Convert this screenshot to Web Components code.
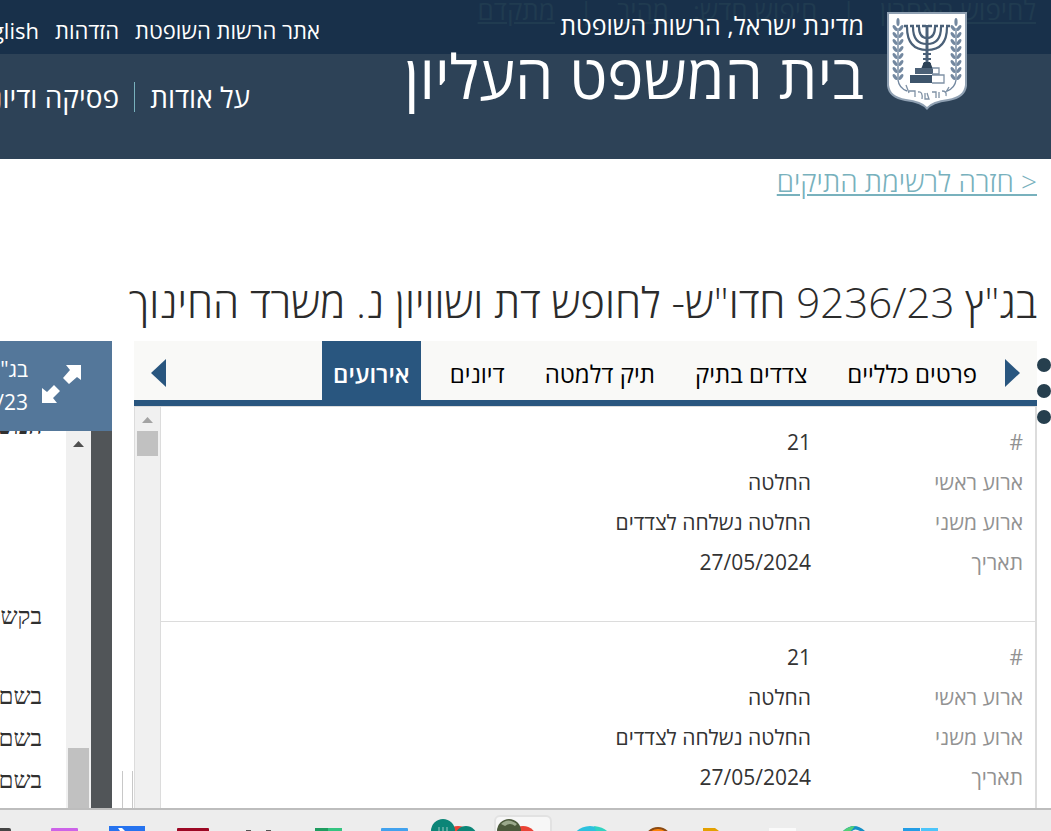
<!DOCTYPE html>
<html lang="he" dir="rtl">
<head>
<meta charset="utf-8">
<title>בית המשפט העליון</title>
<style>
    html, body {
        margin: 0;
        height: 100%;
        overflow: hidden;
    }

    body {
        background: #ffffff;
        color: #2b2b2b;
        font-family: "Open Sans", "Noto Sans", sans-serif;
        --navy: #18304a;
        --slate: #2d4257;
        --blue: #29567f;
        --teal: #78b1bd;
        --line: #dcdcdc;
    }
</style>
</head>
<body>
<court-page></court-page>

<script>
// Small helper: every element clones its own template into an open root
class BaseElement extends HTMLElement {
    constructor() {
        super();
        this.attachShadow({ mode: 'open' });
    }

    connectedCallback() {
        const template = document.createElement('template');
        template.innerHTML = this.markup();
        this.shadowRoot.replaceChildren(template.content.cloneNode(true));
    }
}

class StateEmblem extends BaseElement {
    markup() {
        // Laurel leaves, mirrored on both sides of the menorah
        let leaves = '';
        for (let i = 0; i < 8; i++) {
            const y = 16 + i * 7;
            leaves += `<ellipse cx="8" cy="${y}" rx="1.6" ry="3.4" transform="rotate(-35 8 ${y})"/>
                <ellipse cx="14" cy="${y}" rx="1.6" ry="3.4" transform="rotate(35 14 ${y})"/>`;
        }
        return `
            <style>
                :host { display: block; width: 80px; }
                svg { display: block; width: 100%; height: auto; }
            </style>
            <svg viewBox="0 0 80 98" role="img" aria-label="סמל המדינה">
                <path d="M0 0H80V74C79 82 73 87 62 89Q45 91 40 98Q35 91 18 89C7 87 1 82 0 74Z" fill="#8fa0b2"/>
                <path d="M2 2H78V73C77 81 72 85 61 87Q45 89 40 95Q35 89 19 87C8 85 3 81 2 73Z" fill="#fff"/>
                <g fill="#7388a0" stroke="none">
                    <g>${leaves}<ellipse cx="11" cy="10" rx="1.6" ry="4"/></g>
                    <g transform="matrix(-1 0 0 1 80 0)">${leaves}<ellipse cx="11" cy="10" rx="1.6" ry="4"/></g>
                </g>
                <g fill="none" stroke="#7388a0" stroke-width="1.4">
                    <path d="M11 16V68Q12 76 20 79M69 16V68Q68 76 60 79"/>
                </g>
                <g fill="none" stroke="#4a6078" stroke-width="2.2">
                    <path d="M20 15Q20 38 40 38Q60 38 60 15"/>
                    <path d="M26 15Q26 32 40 32Q54 32 54 15"/>
                    <path d="M32 15Q32 26 40 26Q48 26 48 15"/>
                    <path d="M40 13V54" stroke-width="3"/>
                    <path d="M17 14H63" stroke-width="2.6" stroke-dasharray="4 2"/>
                    <path d="M36 42H44M36 47H44M36 52H44"/>
                </g>
                <path d="M37 50H43L46 57H34Z" fill="#2d4257"/>
                <path d="M28 56H46V62H28Z" fill="#4c6177"/>
                <path d="M23 63H45V71H23Z" fill="#3d546b"/>
                <g fill="none" stroke="#7f91a5" stroke-width="1.3">
                    <path d="M45 56H52V62H45M45 63H57V71H45"/>
                    <path d="M19 73L22 81M22 79H28V85M31 80Q36 79 35 87M38 81V87H42L40 81M45 80H49V86M52 80V86M55 79Q60 79 59 84M62 75L59 80"/>
                </g>
            </svg>
        `;
    }
}
customElements.define('state-emblem', StateEmblem);

class CourtHeader extends BaseElement {
    markup() {
        return `
            <style>
                :host {
                    display: block;
                    position: relative;
                    flex: none;
                    color: #ffffff;
                    background: linear-gradient(var(--navy) 54px, var(--slate) 54px);
                }
                a { color: inherit; text-decoration: none; white-space: nowrap; }
                /* page search bar showing faintly through the sticky header */
                .ghost {
                    position: absolute;
                    top: -10px;
                    right: 15px;
                    display: flex;
                    gap: 24px;
                    font-size: 26px;
                    line-height: 40px;
                    color: #203b50;
                    white-space: nowrap;
                }
                .ghost a { text-decoration: underline; }
                .bar {
                    position: relative;
                    display: flex;
                    align-items: flex-start;
                    height: 147px;
                    padding: 12px 84px 0 0;
                }
                .titles { flex: 1; padding-right: 23px; white-space: nowrap; }
                .titles p { margin: 0; font-size: 25px; line-height: 26px; }
                .titles h1 { margin: 0; font-size: 61px; line-height: 76px; font-weight: 400; }
                .navs { flex: 0 0 320px; width: 320px; }
                nav { display: flex; }
                .top { gap: 16px; font-size: 22px; line-height: 36px; }
                .main { margin-top: 34px; padding-right: 70px; font-size: 28px; line-height: 30px; }
                .main a + a { margin-right: 15px; padding-right: 15px; border-right: 1px solid var(--teal); }
            </style>
            <div class="ghost">
                <a href="#last">לחיפוש האחרון</a><span>|</span><span>חיפוש חדש:</span>
                <a href="#quick">מהיר</a><span>|</span><a href="#advanced">מתקדם</a>
            </div>
            <div class="bar">
                <state-emblem></state-emblem>
                <div class="titles">
                    <p>מדינת ישראל, הרשות השופטת</p>
                    <h1>בית המשפט העליון</h1>
                </div>
                <div class="navs">
                    <nav class="top">
                        <a href="#authority">אתר הרשות השופטת</a>
                        <a href="#login">הזדהות</a>
                        <a href="#en">English</a>
                    </nav>
                    <nav class="main">
                        <a href="#about">על אודות</a>
                        <a href="#rulings">פסיקה ודיונים</a>
                    </nav>
                </div>
            </div>
        `;
    }
}
customElements.define('court-header', CourtHeader);

class ScrollTrack extends BaseElement {
    markup() {
        return `
            <style>
                :host {
                    display: flex;
                    flex-direction: column;
                    align-items: center;
                    box-sizing: border-box;
                    background: #f0f0f0;
                }
                svg { flex: none; margin-top: 10px; }
                .thumb {
                    width: 21px;
                    height: var(--thumb-height, 25px);
                    margin-top: var(--thumb-top, 8px);
                    background: #c1c1c1;
                }
            </style>
            <svg width="11" height="6" viewBox="0 0 11 6"><path d="M0 6L5.500 0L11 6Z" fill="var(--arrow, #505050)"/></svg>
            <div class="thumb"></div>
        `;
    }
}
customElements.define('scroll-track', ScrollTrack);

class CaseTabs extends BaseElement {
    markup() {
        return `
            <style>
                :host {
                    display: flex;
                    flex: none;
                    height: 59px;
                    background: #f9f9f7;
                    border-bottom: 6px solid var(--blue);
                }
                button {
                    border: 0;
                    padding: 0 11px;
                    background: none;
                    color: #000000;
                    font: inherit;
                    font-size: 24px;
                    line-height: 32px;
                    white-space: nowrap;
                    cursor: pointer;
                }
                .tabs { display: flex; flex: 1; gap: 18px; }
                .tabs button { padding-top: 7px; }
                .tabs .active { background: var(--blue); color: #ffffff; font-weight: 600; }
                .arrow { padding: 4px 17px 0; }
                .next { padding-left: 17px; }
                svg { display: block; }
            </style>
            <button class="arrow next" aria-label="הקודם"><svg width="15" height="28" viewBox="0 0 15 28"><path d="M0 0L15 14L0 28Z" fill="#29567f"/></svg></button>
            <div class="tabs" role="tablist">
                <button role="tab">פרטים כלליים</button>
                <button role="tab">צדדים בתיק</button>
                <button role="tab">תיק דלמטה</button>
                <button role="tab">דיונים</button>
                <button role="tab" class="active" aria-selected="true">אירועים</button>
            </div>
            <button class="arrow" aria-label="הבא"><svg width="15" height="28" viewBox="0 0 15 28"><path d="M15 0L0 14L15 28Z" fill="#29567f"/></svg></button>
        `;
    }
}
customElements.define('case-tabs', CaseTabs);

class CaseEvent extends BaseElement {
    markup() {
        return `
            <style>
                :host { display: block; border-bottom: 1px solid var(--line); }
                dl {
                    display: grid;
                    grid-template-columns: 212px 1fr;
                    margin: 0;
                    padding: 15px 12px 39px;
                    font-size: 21px;
                    line-height: 40px;
                }
                dt { color: #929292; }
                dd { margin: 0; color: #333333; }
            </style>
            <dl>
                <dt>#</dt><dd><slot name="number"></slot></dd>
                <dt>ארוע ראשי</dt><dd><slot name="main"></slot></dd>
                <dt>ארוע משני</dt><dd><slot name="sub"></slot></dd>
                <dt>תאריך</dt><dd><slot name="date"></slot></dd>
            </dl>
        `;
    }
}
customElements.define('case-event', CaseEvent);

class DocumentViewer extends BaseElement {
    markup() {
        return `
            <style>
                :host { display: flex; flex-direction: column; min-height: 0; overflow: hidden; }
                header {
                    display: flex;
                    align-items: flex-start;
                    flex: none;
                    height: 78px;
                    padding: 12px 30px 0 0;
                    background: #54779a;
                    color: #ffffff;
                    font-size: 21px;
                    line-height: 33px;
                    white-space: nowrap;
                }
                button { border: 0; padding: 11px 0 0 14px; background: none; cursor: pointer; }
                svg { display: block; }
                .view { display: flex; flex: 1; min-height: 0; background: #515558; }
                scroll-track { flex: 0 0 25px; margin-right: 21px; --thumb-top: 301px; --thumb-height: 80px; }
                .sheet {
                    flex: 1;
                    padding-right: 24px;
                    background: #ffffff;
                    color: #303030;
                    font-family: "Liberation Serif", serif;
                    font-size: 24px;
                    line-height: 42px;
                    white-space: nowrap;
                    overflow: hidden;
                }
                p { margin: 0; }
                .cut { margin-top: -26px; font-weight: 700; }
                .request { margin-top: 148px; }
                .sign { margin-top: 38px; }
            </style>
            <header>
                <button aria-label="הגדלה"><svg width="40" height="40" viewBox="0 0 40 40" fill="#fff">
                    <path d="M24 1H39V16L35 13L27 20L21 14L28 6Z"/>
                    <path d="M0 24L5 28L12 21L18 27L11 34L15 39H0Z"/>
                </svg></button>
                <div>בג"ץ<br>9236/23</div>
            </header>
            <div class="view">
                <scroll-track></scroll-track>
                <div class="sheet">
                    <p class="cut">המשיבים</p>
                    <p class="request">בקשה</p>
                    <p class="sign">בשם</p>
                    <p>בשם</p>
                    <p>בשם</p>
                </div>
            </div>
        `;
    }
}
customElements.define('document-viewer', DocumentViewer);

class TaskBar extends BaseElement {
    markup() {
        return `
            <style>
                :host {
                    display: flex;
                    flex: none;
                    direction: ltr;
                    height: 21px;
                    overflow: hidden;
                    background: #ededed;
                    border-top: 2px solid #bdbdbd;
                }
                svg { display: block; flex: none; }
            </style>
            <svg width="31" height="21"><rect x="-10" y="18" width="21" height="20" rx="2" fill="#454545"/></svg>
            <svg width="66" height="21"><rect x="20" y="18" width="27" height="20" rx="1" fill="#cc63e8"/></svg>
            <svg width="66" height="21"><path d="M12 16H48V21H12Z" fill="#2673ef"/><path d="M21 18H25L28 21H23Z" fill="#fff"/></svg>
            <svg width="66" height="21"><rect x="14" y="18" width="32" height="20" rx="1" fill="#9c0824"/></svg>
            <svg width="66" height="21"><path d="M17 20H22V21H17ZM37 20H42V21H37Z" fill="#555"/></svg>
            <svg width="66" height="21"><path d="M20 18H34V21H20Z" fill="#1f9c60"/><path d="M33 18H47V21H33Z" fill="#35c481"/></svg>
            <svg width="66" height="21"><rect x="20" y="18" width="27" height="20" rx="1" fill="#42a2ee"/></svg>
            <svg width="66" height="21"><circle cx="31" cy="30" r="14" fill="#ea4335"/><circle cx="16" cy="21" r="12" fill="#0b8577"/><circle cx="39" cy="27" r="11" fill="#0b8577"/><path d="M12 17V21M16 17V21M20 17V21" stroke="#9cc9c3" stroke-width="1"/></svg>
            <svg width="66" height="21"><rect x="2" y="6" width="56" height="30" rx="5" fill="#f7f7f7" stroke="#e2e2e2" stroke-width="2"/><circle cx="30" cy="30" r="14" fill="#ea4335"/><circle cx="16" cy="21" r="12" fill="#4b5a3b"/><path d="M8 14Q15 7 24 14L22 16Q17 12 12 16Z" fill="#9aa98b"/></svg>
            <svg width="66" height="21"><circle cx="31" cy="36" r="20" fill="#2cc1de"/><path d="M35 16Q44 17 48 21H37Z" fill="#32d3c1"/></svg>
            <svg width="66" height="21"><circle cx="33" cy="31" r="13" fill="#ff850a" stroke="#8b4a12" stroke-width="2"/></svg>
            <svg width="66" height="21"><path d="M12 18H24L28 21H12Z" fill="#e3a000"/></svg>
            <svg width="66" height="21"><path d="M12 18H39V21H12Z" fill="#fafafa"/></svg>
            <svg width="66" height="21"><path d="M20 21Q31 11 42 21H37Q32 18 29 21Z" fill="#148fc6"/><path d="M20 21Q26 16 32 16L28 21Z" fill="#53d176"/></svg>
            <svg width="66" height="21"><path d="M14 18H31V21H14Z" fill="#239de5"/><path d="M32 18H49V21H32Z" fill="#4cc5fa"/></svg>
        `;
    }
}
customElements.define('task-bar', TaskBar);

class CourtPage extends BaseElement {
    markup() {
        const event = `
            <case-event>
                <span slot="number">21</span>
                <span slot="main">החלטה</span>
                <span slot="sub">החלטה נשלחה לצדדים</span>
                <span slot="date">27/05/2024</span>
            </case-event>
        `;
        return `
            <style>
                :host { display: flex; flex-direction: column; height: 100vh; }
                .back {
                    align-self: flex-start;
                    margin: 4px 14px 0;
                    color: var(--teal);
                    font-size: 28px;
                    line-height: 36px;
                    font-weight: 300;
                }
                h2 {
                    margin: 73px 14px 0;
                    font-size: 42px;
                    line-height: 60px;
                    font-weight: 300;
                    white-space: nowrap;
                }
                main { display: flex; flex: 1; min-height: 0; margin-top: 9px; }
                .dots { display: flex; flex-direction: column; gap: 12px; flex: 0 0 14px; padding-top: 17px; }
                .dots i { height: 14px; border-radius: 50%; background: #263f4e; }
                .case { display: flex; flex-direction: column; flex: 1; min-height: 0; }
                .panel {
                    display: flex;
                    flex: 1;
                    min-height: 0;
                    border: solid var(--line);
                    border-width: 1px 2px 0 1px;
                }
                .events { flex: 1; overflow: hidden; }
                .panel scroll-track { flex: 0 0 26px; border-right: 1px solid var(--line); --arrow: #a3a3a3; }
                .gutter { display: flex; flex: 0 0 22px; align-items: flex-end; }
                .gutter div {
                    height: 37px;
                    width: 9px;
                    margin-right: 1px;
                    border: solid #c8c8c8;
                    border-width: 0 1px;
                }
                document-viewer { flex: 0 0 112px; }
            </style>
            <court-header></court-header>
            <a class="back" href="#cases">&lt; חזרה לרשימת התיקים</a>
            <h2>בג"ץ 9236/23 חדו"ש- לחופש דת ושוויון נ. משרד החינוך</h2>
            <main>
                <div class="dots"><i></i><i></i><i></i></div>
                <section class="case">
                    <case-tabs></case-tabs>
                    <div class="panel">
                        <div class="events">${event}${event}</div>
                        <scroll-track></scroll-track>
                    </div>
                </section>
                <div class="gutter"><div></div></div>
                <document-viewer></document-viewer>
            </main>
            <task-bar></task-bar>
        `;
    }
}
customElements.define('court-page', CourtPage);
</script>
</body>
</html>
